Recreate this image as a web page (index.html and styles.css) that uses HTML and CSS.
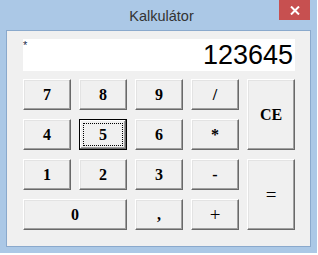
FILE: index.html
```html
<!DOCTYPE html>
<html lang="hu">
<head>
    <meta charset="UTF-8">
    <meta name="viewport" content="width=device-width, initial-scale=1.0">
    <title>Kalkulátor</title>
    <link rel="stylesheet" href="styles.css">
</head>

<body>
  <div class="window">
    <div class="titlebar">
      <span class="title">Kalkulátor</span>
      <div class="close">
        <svg width="10" height="9" viewBox="0 0 10 9"><path d="M1 0.5 L9 8.5 M9 0.5 L1 8.5" stroke="#fff" stroke-width="2"/></svg>
      </div>
    </div>
    <div class="client">
      <div class="display">
        <span class="mark">*</span>
        <span class="value">123645</span>
      </div>
      <div class="keys">
        <button class="key">7</button>
        <button class="key">8</button>
        <button class="key">9</button>
        <button class="key">/</button>
        <button class="key tall">CE</button>
        <button class="key">4</button>
        <button class="key focused">5</button>
        <button class="key">6</button>
        <button class="key">*</button>
        <button class="key">1</button>
        <button class="key">2</button>
        <button class="key">3</button>
        <button class="key">-</button>
        <button class="key tall big">=</button>
        <button class="key wide">0</button>
        <button class="key">,</button>
        <button class="key big">+</button>
      </div>
    </div>
  </div>
</body>
</html>
```

FILE: styles.css
```css
body { margin: 0; width: 318px; height: 255px; background: #fff; font-family: "Liberation Sans", Arial, sans-serif; overflow: hidden; }

.window { width: 317px; height: 253px; box-sizing: border-box; background: #abc8e6; padding: 0 6px; position: relative; }

.titlebar { height: 30px; display: flex; align-items: center; justify-content: center; }
.title { font-size: 14.5px; color: #333; padding-top: 1px; padding-left: 6px; }
.close { position: absolute; top: 0; left: 279px; width: 31px; height: 20px; background: #c75050; display: flex; align-items: center; justify-content: center; }
.close svg { display: block; }

.client { height: 217px; box-sizing: border-box; border: 1px solid #8aa9cc; background: #f0f0f0; padding: 8px 0 0 16px; }

.display { width: 272px; height: 32px; background: #fff; display: flex; justify-content: space-between; align-items: flex-start; }
.mark { font-size: 11px; color: #1b2a4a; line-height: 9px; padding-top: 2px; }
.value { font-size: 27px; line-height: 32px; color: #000; padding-right: 2px; }

.keys { margin-top: 8px; display: grid; grid-template-columns: repeat(5, 48px); grid-auto-rows: 31px; column-gap: 8px; row-gap: 9px; }

.key { margin: 0; padding: 0; font-family: "Liberation Serif", "Times New Roman", serif; font-weight: bold; font-size: 16px; color: #000; background: #f0f0f0; border: 1px solid; border-color: #fff #696969 #696969 #fff; box-shadow: inset -1px -1px #a0a0a0, inset 1px 1px #e3e3e3; }
.key.tall { grid-row: span 2; }
.key.wide { grid-column: span 2; }
.key.big { font-size: 19px; font-weight: normal; }
.key.focused { border: 1px solid #000; box-shadow: inset -1px -1px #696969, inset 1px 1px #fff, inset -2px -2px #a0a0a0; outline: 1px dotted #000; outline-offset: -5px; }
```
